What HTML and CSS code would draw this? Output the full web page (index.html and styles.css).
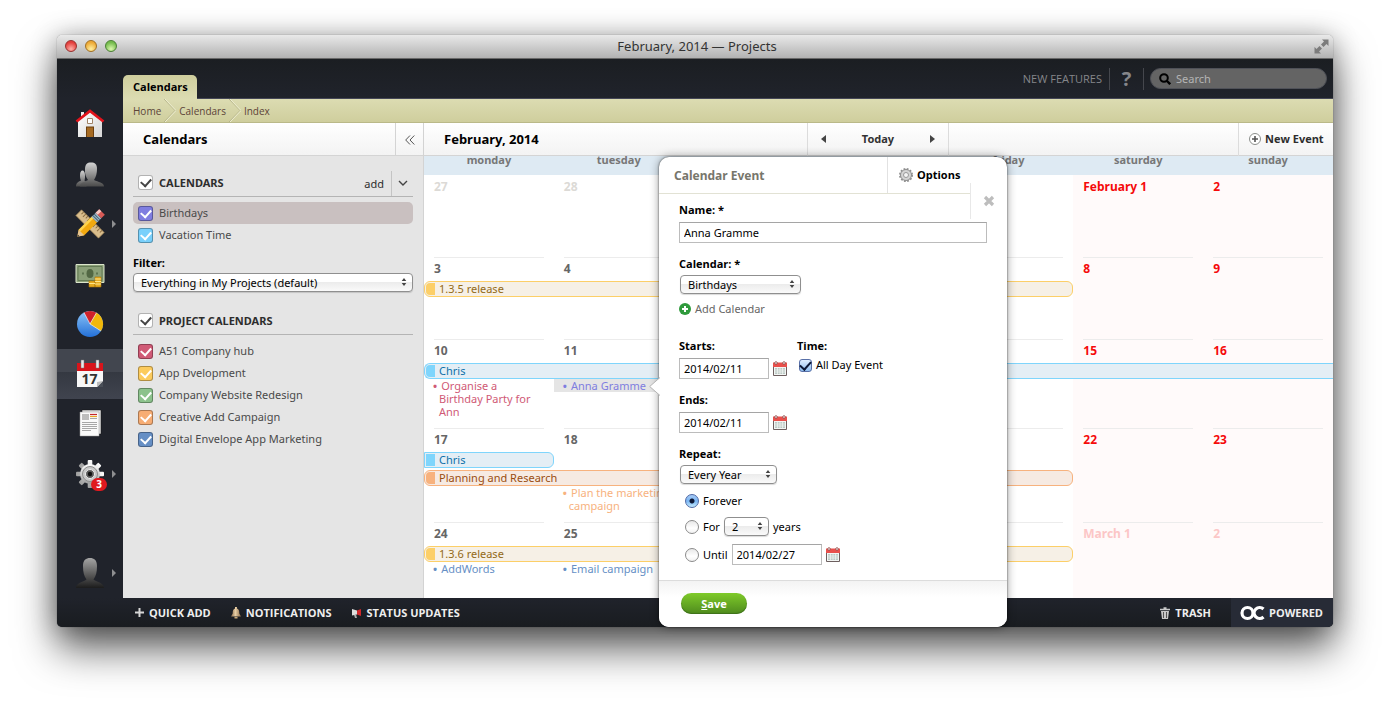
FILE: index.html
```html
<!DOCTYPE html>
<html lang="en">
<head>
<meta charset="utf-8">
<title>February, 2014 — Projects</title>
<link rel="stylesheet" href="styles.css">
</head>
<body>
<svg class="defs" aria-hidden="true">
  <defs>
    <linearGradient id="silver" x1="0" y1="0" x2="0" y2="1"><stop offset="0" stop-color="#d4d4d4"/><stop offset="1" stop-color="#4a4a4a"/></linearGradient>
    <linearGradient id="smoke" x1="0" y1="0" x2="0" y2="1"><stop offset="0" stop-color="#a5a5a5"/><stop offset="1" stop-color="#1c1c1c"/></linearGradient>
    <linearGradient id="wall" x1="0" y1="0" x2="1" y2="1"><stop offset="0" stop-color="#fff"/><stop offset="1" stop-color="#d6d6d6"/></linearGradient>
    <linearGradient id="blue" x1="0" y1="0" x2="0" y2="1"><stop offset="0" stop-color="#8cc4f7"/><stop offset="1" stop-color="#2370d8"/></linearGradient>
    <linearGradient id="steel" x1="0" y1="0" x2="0" y2="1"><stop offset="0" stop-color="#fdfdfd"/><stop offset="1" stop-color="#9d9d9d"/></linearGradient>
    <linearGradient id="brass" x1="0" y1="0" x2="1" y2="0"><stop offset="0" stop-color="#8a6a48"/><stop offset=".45" stop-color="#e8cfa6"/><stop offset="1" stop-color="#8a6a48"/></linearGradient>
  </defs>
  <symbol id="date" viewBox="0 0 14 15">
    <path d="M.5 3v11.5h13V3" fill="#f3f6f4" stroke="#6d5f5f"/>
    <path d="M0 1.500h14V6H0z" fill="#e9504c"/>
    <path d="M2 7h10v6H2z" fill="#bccac5"/>
    <path d="M4.500 7v6M7 7v6M9.500 7v6M2 9h10M2 11h10" stroke="#f3f6f4" stroke-width=".7"/>
    <circle cx="3" cy="2" r="1.300" fill="#fff" stroke="#86403e" stroke-width=".8"/><circle cx="11" cy="2" r="1.300" fill="#fff" stroke="#86403e" stroke-width=".8"/>
  </symbol>
  <symbol id="updown" viewBox="0 0 6 10"><path d="M3 1l2.300 3h-4.600zM3 9l2.300-3h-4.600z" fill="#444"/></symbol>
  <symbol id="cog" viewBox="-14 -14 28 28">
    <g><rect x="-2.300" y="-14" width="4.600" height="28" rx="1"/><rect x="-2.300" y="-14" width="4.600" height="28" rx="1" transform="rotate(45)"/><rect x="-2.300" y="-14" width="4.600" height="28" rx="1" transform="rotate(90)"/><rect x="-2.300" y="-14" width="4.600" height="28" rx="1" transform="rotate(135)"/><circle r="10"/></g>
  </symbol>
</svg>

<div class="window">
  <header class="titlebar">
    <div class="lights"><button class="light red" aria-label="Close window"></button><button class="light amber" aria-label="Minimise"></button><button class="light green" aria-label="Zoom"></button></div>
    <h1 class="window-title">February, 2014 — Projects</h1>
    <button class="fullscreen" aria-label="Full screen"><svg width="15" height="15" viewBox="0 0 15 15"><path d="M8 .5h6.500V7l-2-2L9.500 8 7 5.500l3-3zM.500 8v6.500H7l-2-2L8 9.500 5.500 7l-3 3z" fill="#7c7c7c"/></svg></button>
  </header>

  <div class="app">
    <nav class="rail" aria-label="Sections">
      <a class="rail-item" href="#home" aria-label="Home"><svg width="30" height="30" viewBox="0 0 30 30"><path d="M6 3h3v6H6z" fill="#eee"/><path d="M3 12L15 3l12 9v16H3z" fill="url(#wall)"/><path d="M1.500 12.500L15 2l13.500 10.500" fill="none" stroke="#e3131b" stroke-width="2.800"/><path d="M12.500 9.500h5v5h-5z" fill="#fff" stroke="#a08468"/><path d="M11 17.500h8V28h-8z" fill="#6b3f10"/><path d="M12 18.500h6V28h-6z" fill="#a56a22"/></svg></a>
      <a class="rail-item" href="#people" aria-label="People"><svg width="30" height="30" viewBox="0 0 30 30"><path d="M1 27.500c0-4 3-5 5-6-1.500-3-1.500-10 1.500-10s3 7 2 10l2 2v4z" fill="url(#silver)"/><path d="M5 27.500c0-4 4-4.500 8-6.500-2-3-3.500-6-3-11 .3-5 2-6.500 6-6.500s6 1.500 6 6.500c0 4-1 8-3 11 4 2 10 2.500 10 6.500z" fill="url(#silver)"/></svg></a>
      <a class="rail-item more" href="#projects" aria-label="Projects"><svg width="30" height="30" viewBox="0 0 30 30"><g transform="rotate(45 15 15)"><path d="M-1 11h32v8H-1z" fill="#d9bd8c" stroke="#9c8054" stroke-width=".7"/><path d="M2 11v3m3-3v4m3-4v3m3-3v4m8-4v4m3-4v3m3-3v4m3-4v3" stroke="#8b6c40"/></g><g transform="rotate(-45 15 15)"><path d="M-3 15l6-4h18v8H3z" fill="#f2a90f"/><path d="M3 11h19v2.500H3z" fill="#ffd34d"/><path d="M-3 15l6-4v8z" fill="#e5c493"/><path d="M-3 15l2-1.300v2.600z" fill="#333"/><path d="M21 11h6v8h-6z" fill="#9fb9c8"/><path d="M23 11v8m2-8v8" stroke="#456275"/><path d="M27 11h5v8h-5z" fill="#d75a56"/><path d="M27 11h5v3h-5z" fill="#f6cbc6"/></g></svg></a>
      <a class="rail-item" href="#finance" aria-label="Finance"><svg width="30" height="30" viewBox="0 0 30 30"><path d="M1 5.500h28v18H1z" fill="#8ba078" stroke="#dbe5cb"/><path d="M3 7.500h24v14H3z" fill="none" stroke="#647b55"/><ellipse cx="15" cy="14.500" rx="3.500" ry="4.500" fill="#526743"/><path d="M7 13.500h2v2H7zM21 13.500h2v2h-2z" fill="#5f7550"/><path d="M20 18h6v10h-6zM14 22h6v6h-6z" fill="#e5ab20" stroke="#a87309" stroke-width=".6"/><path d="M20 20h6m-6 2.500h6m-6 2.500h6m-12-.5h6" stroke="#ffe58a"/></svg></a>
      <a class="rail-item" href="#reports" aria-label="Reports"><svg width="28" height="28" viewBox="0 0 28 28"><circle cx="14" cy="14" r="13" fill="url(#blue)"/><path d="M14 14L8 2.500A13 13 0 0 1 20.500 2.700z" fill="#d0222a"/><path d="M14 14l6.500-11.300A13 13 0 0 1 25 21z" fill="#f1b80a"/><path d="M8 2.500L14 14l6.500-11.300M14 14l11 7" fill="none" stroke="#fff" stroke-width=".6"/></svg></a>
      <a class="rail-item current" href="#calendar" aria-label="Calendar" aria-current="page"><svg width="28" height="30" viewBox="0 0 28 30"><path d="M1 4h26v24H1z" fill="#f7f7f7"/><path d="M1 4h26v8H1z" fill="#d8141b"/><path d="M5 1h3v8H5zM20 1h3v8h-3z" fill="#e8e8e8" stroke="#777" stroke-width=".5"/><path d="M21 28l6-6v6z" fill="#4a4f58"/><path d="M21 28v-5l6-1z" fill="#bbb"/><text x="13.500" y="25" class="page-day">17</text></svg></a>
      <a class="rail-item" href="#documents" aria-label="Documents"><svg width="24" height="30" viewBox="0 0 24 30"><path d="M4 1h19v24H4z" fill="#e3e3e3" stroke="#111" stroke-width=".5"/><path d="M2 3h19v24H2z" fill="#fafafa" stroke="#999" stroke-width=".5"/><path d="M4 5h7v6H4z" fill="#bdbdbd"/><path d="M12 5.500h7" stroke="#c5262c" stroke-width="1.200"/><path d="M12 7.500h7" stroke="#e8a82b" stroke-width="1.200"/><path d="M12 9.500h7M4 13.500h15M4 15.500h15M4 17.500h15M4 19.500h15M4 21.500h9" stroke="#a7a7a7"/></svg></a>
      <a class="rail-item more" href="#settings" aria-label="Settings, 3 alerts"><svg width="28" height="28" viewBox="-14 -14 28 28"><use href="#cog" x="-14" y="-14" width="28" height="28" fill="url(#steel)"/><circle r="7.500" fill="#c9c9c9" stroke="#8d8d8d"/><circle r="4.500" fill="#5d5d5d" stroke="#eee"/><circle r="2.200" fill="#111"/></svg><span class="count">3</span></a>
      <a class="rail-item more profile" href="#profile" aria-label="Profile"><svg width="30" height="32" viewBox="0 0 30 32"><path d="M1 31c0-5 7-6 10.500-8.500C9 19 8 15 8 9c0-6 3-8 7-8s7 2 7 8c0 6-1 10-3.500 13.500C22 25 29 26 29 31z" fill="url(#smoke)"/></svg></a>
    </nav>

    <main class="stage">
      <header class="topbar">
        <a class="tab" href="#calendars">Calendars</a>
        <div class="tools">
          <a class="features" href="#new">NEW FEATURES</a>
          <a class="help" href="#help" aria-label="Help">?</a>
          <form class="search" role="search"><svg width="12" height="12" viewBox="0 0 12 12"><circle cx="5" cy="5" r="3.800" fill="none" stroke="#000" stroke-width="2"/><path d="M8 8l3.200 3.200" stroke="#000" stroke-width="2.400"/></svg><input type="search" placeholder="Search" aria-label="Search"></form>
        </div>
      </header>
      <nav class="crumbs" aria-label="Breadcrumb">
        <a href="#home">Home</a><svg width="12" height="23" viewBox="0 0 12 23"><path d="M0 0l11 11.500L0 23" fill="none" stroke="#b5b488"/><path d="M1 0l11 11.500L1 23" fill="none" stroke="#eeeed2"/></svg><a href="#calendars">Calendars</a><svg width="12" height="23" viewBox="0 0 12 23"><path d="M0 0l11 11.500L0 23" fill="none" stroke="#b5b488"/><path d="M1 0l11 11.500L1 23" fill="none" stroke="#eeeed2"/></svg><a href="#index">Index</a>
      </nav>

      <div class="panes">
        <aside class="sidebar">
          <div class="bar side-bar"><h2 class="pane-title">Calendars</h2><button class="collapse" aria-label="Collapse"><svg width="10" height="10" viewBox="0 0 10 10"><path d="M5 .5L.700 5 5 9.500M9.300.5L5 5l4.300 4.500" fill="none" stroke="#555"/></svg></button></div>
          <div class="lists">
            <div class="group-head"><label><input class="tick plain" type="checkbox" checked> CALENDARS</label><button class="add">add</button><button class="drop" aria-label="Calendar menu"><svg width="10" height="7" viewBox="0 0 10 7"><path d="M1 1l4 4 4-4" fill="none" stroke="#444" stroke-width="1.400"/></svg></button></div>
            <label class="cal selected"><input class="tick violet" type="checkbox" checked> Birthdays</label>
            <label class="cal"><input class="tick sky" type="checkbox" checked> Vacation Time</label>
            <label class="filter-label" for="filter">Filter:</label>
            <span class="pick wide"><select id="filter"><option>Everything in My Projects (default)</option></select><svg width="6" height="10"><use href="#updown"/></svg></span>
            <div class="group-head second"><label><input class="tick plain" type="checkbox" checked> PROJECT CALENDARS</label></div>
            <label class="cal"><input class="tick rose" type="checkbox" checked> A51 Company hub</label>
            <label class="cal"><input class="tick gold" type="checkbox" checked> App Dvelopment</label>
            <label class="cal"><input class="tick leaf" type="checkbox" checked> Company Website Redesign</label>
            <label class="cal"><input class="tick peach" type="checkbox" checked> Creative Add Campaign</label>
            <label class="cal"><input class="tick navy" type="checkbox" checked> Digital Envelope App Marketing</label>
          </div>
        </aside>

        <section class="calendar">
          <div class="bar month-bar">
            <h2 class="pane-title">February, 2014</h2>
            <div class="stepper"><button aria-label="Previous"><svg width="5" height="8"><path d="M5 0v8L0 4z" fill="#444"/></svg></button><button class="today">Today</button><button aria-label="Next"><svg width="5" height="8"><path d="M0 0v8l5-4z" fill="#444"/></svg></button></div>
            <button class="new-event"><svg width="12" height="12" viewBox="0 0 12 12"><circle cx="6" cy="6" r="5.500" fill="#fff" stroke="#8c8f8c"/><path d="M6 3v6M3 6h6" stroke="#555" stroke-width="1.600"/></svg> New Event</button>
          </div>
          <div class="weekdays"><span>monday</span><span>tuesday</span><span></span><span></span><span>friday</span><span>saturday</span><span>sunday</span></div>
          <div class="weeks">
            <div class="week first"><span class="day dim">27</span><span class="day dim">28</span><span class="day"></span><span class="day"></span><span class="day"></span><span class="day off">February 1</span><span class="day off">2</span></div>
            <div class="week"><span class="day">3</span><span class="day">4</span><span class="day"></span><span class="day"></span><span class="day"></span><span class="day off">8</span><span class="day off">9</span>
              <a class="span gold-span five" href="#e1">1.3.5 release</a></div>
            <div class="week"><span class="day">10</span><span class="day">11</span><span class="day"></span><span class="day"></span><span class="day"></span><span class="day off">15</span><span class="day off">16</span>
              <a class="span sky-span seven runs-on" href="#e2">Chris</a>
              <a class="note rose-note col-1" href="#e3">Organise a Birthday Party for Ann</a><a class="note violet-note col-2 active" href="#e4">Anna Gramme</a></div>
            <div class="week"><span class="day">17</span><span class="day">18</span><span class="day"></span><span class="day"></span><span class="day"></span><span class="day off">22</span><span class="day off">23</span>
              <a class="span sky-span one continued" href="#e5">Chris</a>
              <a class="span peach-span five" href="#e6">Planning and Research</a>
              <a class="note peach-note col-2" href="#e7">Plan the marketing campaign</a></div>
            <div class="week"><span class="day">24</span><span class="day">25</span><span class="day"></span><span class="day"></span><span class="day"></span><span class="day off faint">March 1</span><span class="day off faint">2</span>
              <a class="span gold-span five" href="#e8">1.3.6 release</a>
              <a class="note navy-note col-1" href="#e9">AddWords</a><a class="note navy-note col-2" href="#e10">Email campaign</a></div>
          </div>
        </section>
      </div>
    </main>

    <footer class="statusbar">
      <a href="#add"><svg width="9" height="9"><path d="M4.500 0v9M0 4.500h9" stroke="#d6d6d6" stroke-width="2"/></svg> QUICK ADD</a>
      <a href="#notifications"><svg width="10" height="12" viewBox="0 0 10 12"><path d="M4 0h2v1.500c2 .5 2.300 2.500 2.300 5L10 9.500H0l1.700-3c0-2.500.3-4.500 2.300-5z" fill="url(#brass)"/><path d="M3.500 10h3v1.500h-3z" fill="#c9a877"/></svg> NOTIFICATIONS</a>
      <a href="#status"><svg width="10" height="10" viewBox="0 0 10 10"><path d="M0 1l5 1.500v4L0 7.500z" fill="#ddd"/><path d="M5 2.500L9 1v7L5 6.500z" fill="#d0272b"/><path d="M2 7l2-.5L5 10H3z" fill="#aaa"/></svg> STATUS UPDATES</a>
      <a class="trash" href="#trash"><svg width="10" height="12" viewBox="0 0 10 12"><path d="M0 2.500h10M3.500 1h3" stroke="#c8c8c8" stroke-width="1.400"/><path d="M1 4h8l-1 8H2z" fill="#c8c8c8"/><path d="M3.500 5v6M6.500 5v6" stroke="#555"/></svg> TRASH</a>
      <a class="powered" href="#about"><svg width="25" height="16" viewBox="0 0 25 16"><circle cx="7.500" cy="8" r="5.500" fill="none" stroke="#fff" stroke-width="3.200"/><path d="M23.500 4a5.500 5.500 0 1 0 0 8" fill="none" stroke="#fff" stroke-width="3.200"/></svg> POWERED</a>
    </footer>

    <form class="popover" aria-label="Calendar Event">
      <svg class="pointer" width="11" height="19" viewBox="0 0 11 19"><path d="M11 .5L.7 9.500 11 18.500" fill="#fff" stroke="#b4b4b4"/></svg>
      <header class="popover-head"><h2 class="popover-title">Calendar Event</h2><button type="button" class="options"><svg width="14" height="14" viewBox="0 0 14 14"><circle cx="7" cy="7" r="5.500" fill="#d4d4d4" stroke="#8f8f8f"/><circle cx="7" cy="7" r="6.200" fill="none" stroke="#8f8f8f" stroke-width="1.600" stroke-dasharray="1.800 1.446"/><circle cx="7" cy="7" r="2.500" fill="#f5f5f5" stroke="#999"/></svg> Options</button></header>
      <button type="button" class="close" aria-label="Close"><svg width="12" height="12" viewBox="0 0 12 12"><path d="M2 2l8 8M10 2l-8 8" stroke="#bdbdbd" stroke-width="3.200"/></svg></button>
      <div class="fields">
        <div class="field"><label for="name">Name: *</label><input class="text full" id="name" type="text" value="Anna Gramme"></div>
        <div class="field"><label for="cal">Calendar: *</label><span class="pick mid"><select id="cal"><option>Birthdays</option></select><svg width="6" height="10"><use href="#updown"/></svg></span>
          <a class="add-cal" href="#addcal"><svg width="12" height="12" viewBox="0 0 12 12"><circle cx="6" cy="6" r="6" fill="#2f9a3c"/><path d="M6 3v6M3 6h6" stroke="#fff" stroke-width="2"/></svg> Add Calendar</a></div>
        <div class="pair">
          <div class="field"><label for="starts">Starts:</label><span class="date"><input class="text" id="starts" type="text" value="2014/02/11"><svg width="14" height="15"><use href="#date"/></svg></span></div>
          <div class="field"><span class="caption">Time:</span><label class="all-day"><input class="aqua-box" type="checkbox" checked> All Day Event</label></div>
        </div>
        <div class="field"><label for="ends">Ends:</label><span class="date"><input class="text" id="ends" type="text" value="2014/02/11"><svg width="14" height="15"><use href="#date"/></svg></span></div>
        <div class="field"><label for="repeat">Repeat:</label><span class="pick year"><select id="repeat"><option>Every Year</option></select><svg width="6" height="10"><use href="#updown"/></svg></span></div>
        <div class="choices">
          <div class="choice"><input class="aqua" type="radio" name="until" id="forever" checked><label for="forever">Forever</label></div>
          <div class="choice"><input class="aqua" type="radio" name="until" id="for"><label for="for">For</label><span class="pick tiny"><select aria-label="Number of years"><option>2</option></select><svg width="6" height="10"><use href="#updown"/></svg></span><span class="unit">years</span></div>
          <div class="choice"><input class="aqua" type="radio" name="until" id="till"><label for="till">Until</label><span class="date"><input class="text" type="text" value="2014/02/27" aria-label="Until date"><svg width="14" height="15"><use href="#date"/></svg></span></div>
        </div>
      </div>
      <footer class="popover-foot"><button type="button" class="save"><u>S</u>ave</button></footer>
    </form>
  </div>
</div>
</body>
</html>
```
FILE: styles.css
```css
* { box-sizing: border-box; }
body {
  margin: 0;
  padding: 35px 57px 79px;
  height: 100vh;
  background: #fff;
  font: 11px/14px "Noto Sans", "Open Sans", sans-serif;
  color: #000;
  overflow: hidden;
}
button, input, select { font: inherit; color: inherit; margin: 0; padding: 0; }
button { background: none; border: 0; cursor: pointer; }
a { color: inherit; text-decoration: none; }
h1, h2 { margin: 0; }
svg { display: block; flex: none; }
.defs { position: absolute; width: 0; height: 0; }

/* Window chrome */
.window {
  height: 100%;
  display: flex;
  flex-direction: column;
  border-radius: 5px;
  box-shadow: 0 0 1px rgba(0, 0, 0, .6), 0 22px 40px rgba(0, 0, 0, .62), 0 2px 26px rgba(0, 0, 0, .3);
}
.titlebar {
  flex: none;
  height: 24px;
  display: grid;
  grid-template-columns: 1fr auto 1fr;
  align-items: center;
  padding: 0 4px 1px 8px;
  background: linear-gradient(#e9e9e9, #b2b2b2);
  border-bottom: 1px solid #686868;
  border-radius: 5px 5px 0 0;
}
.lights { display: flex; gap: 8px; }
.light { width: 12px; height: 12px; border-radius: 50%; border: 1px solid; }
.red { background: radial-gradient(circle at 50% 80%, #ffb0a8, #e33e3c 70%); border-color: #97302e; }
.amber { background: radial-gradient(circle at 50% 80%, #fff0a0, #eda935 70%); border-color: #a06f23; }
.green { background: radial-gradient(circle at 50% 80%, #dcf9ae, #74bb4c 70%); border-color: #4a7f35; }
.window-title { font-size: 13px; line-height: 20px; font-weight: 400; color: #333; }
.fullscreen { justify-self: end; }

.app {
  position: relative;
  flex: 1;
  min-height: 0;
  display: grid;
  grid-template-columns: 66px 1fr;
  grid-template-rows: 1fr 29px;
  background: #20232b;
  border-radius: 0 0 5px 5px;
}

/* Icon rail */
.rail { display: flex; flex-direction: column; padding-top: 40px; background: linear-gradient(#1b1e22, #20232b 40px); }
.rail-item { position: relative; height: 50px; display: flex; align-items: center; justify-content: center; }
.rail-item.current { background: linear-gradient(#42464f 45%, #343841 45%, #40444f); }
.more::after {
  content: "";
  position: absolute;
  right: 7px;
  top: 21px;
  border: 4px solid transparent;
  border-left-color: #8d8e90;
  border-right: 0;
}
.profile { margin-top: 49px; }
.count {
  position: absolute;
  left: 34px;
  top: 29px;
  width: 16px;
  height: 13px;
  border-radius: 7px;
  background: #e0191f;
  color: #fff;
  font-size: 10px;
  line-height: 13px;
  font-weight: 700;
  text-align: center;
}
.page-day { font: 700 14px "Noto Sans", sans-serif; fill: #333; text-anchor: middle; }

/* Top area */
.stage { display: flex; flex-direction: column; min-width: 0; min-height: 0; }
.topbar {
  flex: none;
  height: 40px;
  display: flex;
  align-items: flex-end;
  justify-content: space-between;
  background: linear-gradient(#1b1e22, #20232b);
  border-bottom: 1px solid #454757;
}
.tab {
  height: 24px;
  margin-bottom: -1px;
  padding: 0 9px 0 10px;
  border-radius: 5px 5px 0 0;
  background: linear-gradient(#cfce9d, #dcdcb2);
  font-family: "Open Sans", "Noto Sans", sans-serif;
  font-weight: 700;
  line-height: 24px;
}
.tools { display: flex; align-items: center; align-self: center; color: #85868a; padding-right: 6px; }
.features { padding-right: 7px; font-family: "Open Sans", "Noto Sans", sans-serif; line-height: 22px; border-right: 1px solid #45474d; }
.help { width: 34px; margin-right: 6px; border-right: 1px solid #45474d; text-align: center; font-size: 20px; line-height: 22px; font-weight: 700; }
.search {
  width: 177px;
  height: 21px;
  display: flex;
  align-items: center;
  gap: 5px;
  padding: 0 8px;
  background: #646464;
  border: 1px solid #4f5158;
  border-radius: 11px;
}
.search input { min-width: 0; flex: 1; background: none; border: 0; outline: 0; appearance: none; }
.search input::placeholder { color: #b4b4b4; opacity: 1; }
.crumbs {
  flex: none;
  height: 24px;
  display: flex;
  align-items: center;
  gap: 3px;
  padding-left: 10px;
  background: linear-gradient(#dcdcb2, #cfce9d);
  border-bottom: 1px solid #bab989;
  font-family: "Open Sans", "Noto Sans", sans-serif;
  font-size: 10px;
  color: #5c4438;
}

.panes { flex: 1; min-height: 0; display: grid; grid-template-columns: 301px 1fr; }
.bar {
  flex: none;
  height: 33px;
  display: grid;
  align-items: stretch;
  background: linear-gradient(#fff, #f3f3f3);
  border-bottom: 1px solid #d4d4d4;
}
.side-bar { grid-template-columns: 1fr 28px; }
.month-bar { grid-template-columns: minmax(0, 383fr) 142px minmax(0, 289fr) 95px; }
.pane-title { padding-left: 20px; font-size: 13px; line-height: 33px; }

/* Calendar lists */
.sidebar { display: flex; flex-direction: column; background: #e5e5e5; border-right: 1px solid #d3d3d3; }
.collapse { display: grid; place-items: center; border-left: 1px solid #d4d4d4; }
.lists { display: flex; flex-direction: column; padding: 15px 10px 0; color: #4a4a4a; }
.group-head { display: flex; align-items: stretch; height: 26px; margin-bottom: 5px; border-bottom: 1px solid #b4b4b4; line-height: 22px; color: #2d2d2d; }
.group-head label { flex: 1; display: flex; align-items: center; gap: 6px; padding: 0 0 2px 5px; font-weight: 700; }
.add { padding-right: 7px; border-right: 1px solid #c4c4c4; }
.drop { width: 21px; display: grid; place-items: center; }
.cal { display: flex; align-items: center; gap: 6px; height: 22px; padding-left: 5px; border-radius: 5px; }
.selected { background: #c9c0c0; }
.filter-label { margin: 10px 0 3px; color: #000; font-weight: 700; }
.second { margin-top: 17px; }
.tick { appearance: none; flex: none; width: 15px; height: 15px; display: grid; place-items: center; border: 1px solid rgba(0, 0, 0, .3); border-radius: 3px; color: #fff; }
.tick::before, .aqua-box::before { content: ""; width: 9px; height: 5px; margin-top: -2px; border: solid; border-width: 0 0 2px 2px; transform: rotate(-48deg); }
.tick::before { width: 8px; }
.plain { background: #fff; color: #444; }
.violet { background: #7f7de0; }
.sky { background: #79d0fb; }
.rose { background: #d05a76; }
.gold { background: #fccb5e; }
.leaf { background: #8cc28c; }
.peach { background: #f7ad74; }
.navy { background: #668fc5; }

/* Pop-up menus */
.pick { position: relative; display: block; height: 19px; }
.field .pick { margin-top: -1px; }
.pick select {
  appearance: none;
  display: block;
  width: 100%;
  height: 100%;
  padding: 0 7px;
  border: 1px solid #8f8f8f;
  border-radius: 4px;
  background: linear-gradient(#fff 45%, #ececec 50%, #fafafa);
  box-shadow: 0 1px 1px rgba(0, 0, 0, .15);
  color: #000;
}
.pick svg { position: absolute; right: 6px; top: 4px; pointer-events: none; }

/* Month grid */
.calendar { display: flex; flex-direction: column; min-width: 0; background: #fff; overflow: hidden; }
.stepper { display: flex; align-items: center; justify-content: space-between; padding: 0 13px 1px; border: solid #dcdcdc; border-width: 0 1px; font-weight: 700; color: #333; }
.new-event { grid-column: 4; display: flex; align-items: center; gap: 4px; padding: 0 0 1px 10px; border-left: 1px solid #dcdcdc; font-family: "Open Sans", "Noto Sans", sans-serif; font-weight: 700; color: #2d2d2d; white-space: nowrap; }
.weekdays, .week { display: grid; grid-template-columns: repeat(7, minmax(0, 1fr)); }
.weekdays { flex: none; height: 19px; background: #deeaf3; color: #777; font-weight: 700; line-height: 8px; text-align: center; }
.weeks { flex: 1; background: linear-gradient(to right, transparent 71.4%, #fffafa 71.4%); }
.week { grid-auto-rows: min-content; min-height: 82px; padding-bottom: 10px; }
.day { height: 24px; margin: 0 10px; border-top: 1px solid #ececec; color: #666; font-size: 12px; line-height: 22px; font-weight: 700; }
.first .day { border-top-color: transparent; }
.week .dim { color: #dcdad6; }
.week .off { color: #f50a0a; }
.week .faint { color: #fcc6c6; }
.span { display: flex; align-items: center; gap: 4px; height: 16px; padding-left: 1px; border: 1px solid; border-radius: 6px; line-height: 14px; }
.span + .span { margin-top: 2px; }
.span::before { content: ""; width: 9px; height: 12px; border-radius: 4px 0 0 4px; background: currentColor; }
.gold-span { border-color: #fccf68; background: #f6f0e6; color: #936a16; }
.gold-span::before { background: #fccf68; }
.sky-span { border-color: #7fd5fc; background: #e4eef5; color: #0c70a8; }
.sky-span::before { background: #7fd5fc; }
.peach-span { border-color: #f7b27e; background: #f6eae2; color: #9a4d10; }
.peach-span::before { background: #f7b27e; }
.one { grid-column: 1 / span 1; }
.five { grid-column: 1 / span 5; }
.seven { grid-column: 1 / span 7; }
.runs-on { border-right: 0; border-radius: 6px 0 0 6px; }
.continued { border-radius: 0 6px 6px 0; }
.continued::before { border-radius: 0; }
.note { padding: 0 12px 0 15px; line-height: 13px; text-indent: -6px; }
.note::before { content: "•"; margin-right: 4px; font-weight: 700; }
.col-1 { grid-column: 1; }
.col-2 { grid-column: 2; }
.active { background: #e5e5e5; padding-right: 0; align-self: start; }
.rose-note { color: #d05a76; }
.violet-note { color: #7f7de0; }
.peach-note { color: #f7b27e; }
.navy-note { color: #668fc5; }

/* Bottom bar */
.statusbar {
  grid-column: 1 / -1;
  display: flex;
  align-items: center;
  gap: 20px;
  padding-left: 78px;
  border-radius: 0 0 5px 5px;
  background: linear-gradient(#20232b, #191c20);
  color: #eee;
  font-family: "Open Sans", "Noto Sans", sans-serif;
  font-weight: 700;
  overflow: hidden;
}
.statusbar a { display: flex; align-items: center; gap: 5px; }
.statusbar .trash { margin-left: auto; }
.statusbar .powered { align-self: stretch; padding: 0 10px 0 9px; gap: 4px; background: #272b36; }

/* Event popover */
.popover {
  position: absolute;
  left: 602px;
  top: 98px;
  width: 348px;
  background: #fff;
  border-radius: 10px;
  box-shadow: 0 0 2px rgba(0, 0, 0, .7), 0 0 10px rgba(0, 0, 0, .4);
}
.pointer { position: absolute; left: -10px; top: 220px; }
.popover-head { display: flex; height: 37px; margin-right: 37px; border-bottom: 1px solid #e2e2d4; }
.popover-title { flex: 1; padding-left: 15px; font-size: 12px; line-height: 37px; color: #77766c; }
.options { width: 83px; display: flex; align-items: center; gap: 4px; padding-left: 11px; border-left: 1px solid #e2e2e2; font-family: "Open Sans", "Noto Sans", sans-serif; font-weight: 700; }
.close { position: absolute; right: 0; top: 26px; width: 37px; height: 36px; display: grid; place-items: center; border-left: 1px solid #e8e8e8; background: #fff; }
.fields { padding: 9px 20px 15px; display: flex; flex-direction: column; gap: 14px; }
.field > label:first-child, .caption { display: block; margin-bottom: 5px; font-family: "Open Sans", "Noto Sans", sans-serif; font-weight: 700; }
.text { display: block; width: 90px; height: 21px; padding: 0 4px; border: 1px solid #bcbcbc; border-top-color: #a5a5a5; background: #fff; outline: 0; }
.full { width: 100%; }
.date { display: flex; align-items: center; gap: 4px; }
.mid { width: 121px; margin-left: 1px; }
.year { width: 97px; margin-left: 1px; }
.tiny { width: 45px; }
.add-cal { display: flex; align-items: center; gap: 4px; margin: 8px 0 9px; color: #666; }
.pair { display: flex; gap: 10px; }
.all-day { display: flex; align-items: center; gap: 4px; padding-left: 2px; }
.aqua-box { appearance: none; width: 13px; height: 13px; display: grid; place-items: center; border: 1px solid #5870a8; border-radius: 3px; background: linear-gradient(#dfeeff, #8fbdf0); color: #0d1836; }
.aqua { appearance: none; flex: none; width: 14px; height: 14px; border: 1px solid #8b8b8b; border-radius: 50%; background: linear-gradient(#e8e8e8, #fff 60%, #f1f1f1); }
.aqua:checked { border-color: #4e68a5; background: radial-gradient(circle, #0d1836 2px, transparent 3px), linear-gradient(#a8cbf5, #78b4f2 50%, #c5ecff); }
.choices { display: flex; flex-direction: column; gap: 7px; padding-left: 6px; margin-top: -6px; }
.choice { display: flex; align-items: center; gap: 4px; min-height: 18px; }
.choice:last-child { margin-top: 1px; }
.popover-foot { height: 47px; padding: 12px 22px; border-top: 1px solid #dcdcdc; background: linear-gradient(#f3f3f3, #fff 16px); border-radius: 0 0 10px 10px; }
.save { width: 66px; height: 21px; border-radius: 11px; background: linear-gradient(#7fcb29, #4e8a1e); box-shadow: inset 0 -1px 1px #3d701a; color: #fff; font-weight: 700; }
```
